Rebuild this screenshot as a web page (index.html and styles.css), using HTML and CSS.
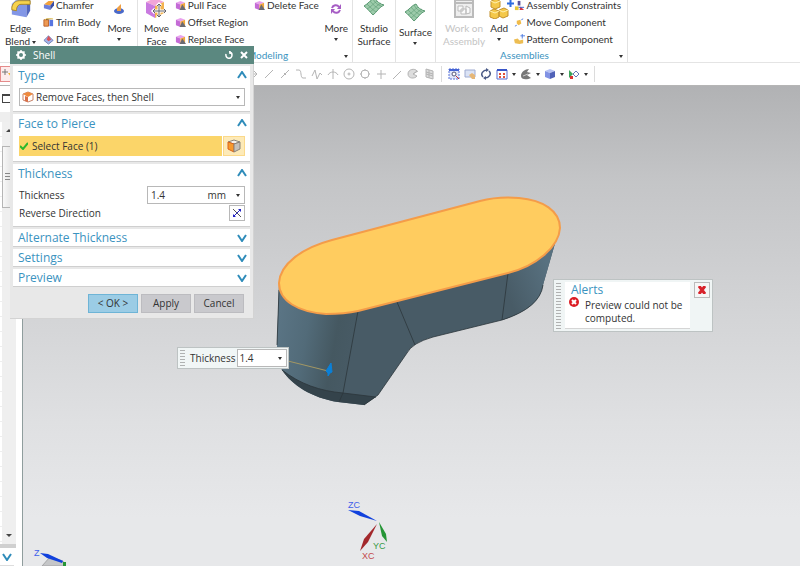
FILE: index.html
```
<!DOCTYPE html>
<html lang="en">
<head>
    <meta charset="UTF-8">
    <meta name="viewport" content="width=device-width, initial-scale=1.0">
    <title>Shell</title>
    <link rel="stylesheet" href="styles.css">
</head>
<body>
    <!-- shared icons -->
    <svg class="defs" aria-hidden="true">
        <symbol id="face" viewBox="0 0 12 12">
            <path d="M1 3l5-2 5 2-5 2z" fill="#e9a2ee"/>
            <path d="M1 3l5 2v6l-5-2z" fill="#c46bd6"/>
            <path d="M6 5l5-2v6l-5 2z" fill="#f0a63c"/>
            <path d="M5 11l3-6 4 6z" fill="#6b6b73"/>
        </symbol>
        <symbol id="block" viewBox="0 0 24 24">
            <path d="M2 7l7-6h13l-4 7z" fill="#9fb6f2"/>
            <path d="M2 7l16 1v14L2 19z" fill="#8296e6"/>
            <path d="M18 8l4-7v14l-4 7z" fill="#5266bd"/>
            <path d="M2 14V11C3 7 6 4 10 4h12v4H12c-3 0-5 3-5 7z" fill="#f7d34e" stroke="#a88421"/>
        </symbol>
        <symbol id="sheet" viewBox="0 0 22 20">
            <path d="M1 9C5 7 8 2 12 1c2 4 5 6 9 7-5 2-7 7-11 10C7 15 4 11 1 9z" fill="#9ccbaa" stroke="#5c9a74"/>
            <path d="M4 7c3 3 6 6 9 8M7 4c3 4 6 6 9 8M10 2c2 4 5 6 8 7M4 12c4-2 7-6 10-8M7 15c4-3 7-7 11-9" fill="none" stroke="#5c9a74" stroke-width=".6"/>
        </symbol>
        <symbol id="cubes" viewBox="0 0 20 22">
            <path d="M2 4l5-2 4 2v6l-5 2-4-2zM1 14l4-2 5 2v6l-4 2-5-2zM10 13l5-2 4 2v6l-5 2-4-2z" fill="#f4c84a" stroke="#c3912c"/>
            <path d="M2 4l4 2 5-2M1 14l5 2 4-2M10 13l4 2 5-2" fill="none" stroke="#fff0b0"/>
        </symbol>
        <symbol id="up" viewBox="0 0 10 8"><path d="M1 7l4-6 4 6" fill="none" stroke="#2f8cba" stroke-width="2"/></symbol>
        <symbol id="down" viewBox="0 0 10 8"><path d="M1 1l4 6 4-6" fill="none" stroke="#2f8cba" stroke-width="2"/></symbol>
    </svg>

    <header class="ribbon">
        <section class="group feature">
            <div class="tools">
                <button class="big">
                    <svg width="24" height="22"><use href="#block"/></svg>
                    <span>Edge<br>Blend<i class="caret"></i></span>
                </button>
                <div class="list">
                    <button><svg viewBox="0 0 12 12"><path d="M1 5l5-4h6L8 6z" fill="#f3a33c"/><path d="M1 5l7 1v5L1 9z" fill="#6c7fdc"/><path d="M8 6l4-5v5l-4 5z" fill="#3a4da6"/></svg>Chamfer</button>
                    <button><svg viewBox="0 0 12 12"><path d="M1 3h5v7H1z" fill="#ee9a54" stroke="#b95f2a"/><path d="M7 3h4v7H7z" fill="#5875e0"/><path d="M2 3l2-1h7" stroke="#f2c94c"/></svg>Trim Body</button>
                    <button><svg viewBox="0 0 12 12"><path d="M1 7l5-5 5 5-5 4z" fill="#a4b5ea" stroke="#7180b5"/><path d="M4 6l2-4 3 4-3 2z" fill="#d9525a"/></svg>Draft</button>
                </div>
                <button class="big more">
                    <svg width="12" height="12" viewBox="0 0 12 12"><ellipse cx="6" cy="8" rx="5" ry="3" fill="#4a69c8"/><path d="M4 5l4-4v7H4z" fill="#ee9f46"/></svg>
                    <span>More<i class="caret"></i></span>
                </button>
            </div>
            <h2></h2>
        </section>
        <section class="group modeling">
            <div class="tools">
                <button class="big">
                    <svg width="22" height="22" viewBox="0 0 22 22"><path d="M1 5l9-4 9 4-9 4z" fill="#f2a5d9"/><path d="M1 5l9 4v12l-9-5z" fill="#c97ae0"/><path d="M10 9l9-4v11l-9 5z" fill="#f3b24d"/><path d="M14 7v13M8 14h13M12 9l2-2 2 2M12 18l2 2 2-2M10 12l-2 2 2 2M19 12l2 2-2 2" fill="none" stroke="#fff" stroke-width="3"/><path d="M14 7v13M8 14h13M12 9l2-2 2 2M12 18l2 2 2-2M10 12l-2 2 2 2M19 12l2 2-2 2" fill="none" stroke="#64646c"/></svg>
                    <span>Move<br>Face</span>
                </button>
                <div class="list">
                    <button><svg><use href="#face"/></svg>Pull Face</button>
                    <button><svg><use href="#face"/></svg>Offset Region</button>
                    <button><svg><use href="#face"/></svg>Replace Face</button>
                </div>
                <div class="list">
                    <button><svg><use href="#face"/></svg>Delete Face</button>
                </div>
                <button class="big more">
                    <svg width="12" height="12" viewBox="0 0 12 12"><path d="M2 5c1-3 5-4 7-1M10 7c-1 3-5 4-7 1" fill="none" stroke="#a65cc4" stroke-width="2"/><path d="M11 1v5H7zM1 11V6h4z" fill="#a65cc4"/></svg>
                    <span>More<i class="caret"></i></span>
                </button>
            </div>
            <h2>Synchronous Modeling<i class="caret corner"></i></h2>
        </section>
        <section class="group studio">
            <div class="tools">
                <button class="big"><svg width="22" height="20"><use href="#sheet"/></svg><span>Studio<br>Surface</span></button>
            </div>
            <h2></h2>
        </section>
        <section class="group surface">
            <div class="tools">
                <button class="big"><svg width="22" height="20"><use href="#sheet"/></svg><span>Surface<i class="caret"></i></span></button>
            </div>
        </section>
        <section class="group assemblies">
            <div class="tools">
                <button class="big" disabled>
                    <svg width="20" height="22" viewBox="0 0 20 22"><path d="M1 3h18v17H1z" fill="#eee" stroke="#bbb" stroke-width="2"/><path d="M1 6h18" stroke="#bbb" stroke-width="2"/><path d="M4 9h5v5H4zM7 12h5v5H7zM12 9l4 2v5l-4 1z" fill="#fafafa" stroke="#bbb"/></svg>
                    <span>Work on<br>Assembly</span>
                </button>
                <button class="big add">
                    <svg width="20" height="22"><use href="#cubes"/></svg>
                    <svg class="plus" width="7" height="7" viewBox="0 0 7 7"><path d="M3.500 0v7M0 3.500h7" stroke="#2e6de0" stroke-width="2"/></svg>
                    <span>Add<i class="caret"></i></span>
                </button>
                <div class="list">
                    <button><svg viewBox="0 0 12 12"><path d="M1 7h4v4H1z" fill="#e6c737"/><path d="M4 1h3v5H4z" fill="#55529e"/><path d="M7 7l4 4H6z" fill="#d23b4b"/><path d="M5 8h6" stroke="#335fd0"/></svg>Assembly Constraints</button>
                    <button><svg viewBox="0 0 12 12"><path d="M3 4l4-1 1 4-3 2-2-2z" fill="#f0bb4a"/><path d="M8 3l2-1M1 10l2-1" stroke="#4a7ae0"/></svg>Move Component</button>
                    <button><svg viewBox="0 0 12 12"><path d="M0 6l4-1 2 2 4-1v4l-4 1-5-1z" fill="#edbd52"/><path d="M9 0v5M7 2h5" stroke="#4a7ae0"/></svg>Pattern Component</button>
                </div>
            </div>
            <h2>Assemblies<i class="caret corner"></i></h2>
        </section>
    </header>

    <nav class="toolbar">
        <button class="filter" aria-label="Selection filter"><svg viewBox="0 0 12 12"><path d="M0 4h6M3 1v6" stroke="#777"/><path d="M6 5h6L9 9z" fill="#f1b431"/></svg></button>
        <div class="snaps">
            <button aria-label="Snap point"><svg viewBox="0 0 12 12"><path d="M1 6h9M7 3l3 3-3 3"/></svg></button>
            <button aria-label="End point"><svg viewBox="0 0 12 12"><path d="M2 10l8-8"/></svg></button>
            <button aria-label="Mid point"><svg viewBox="0 0 12 12"><path d="M2 10l8-8M5 5l2 2"/></svg></button>
            <button aria-label="Control point"><svg viewBox="0 0 12 12"><path d="M1 2h3c3 0 1 8 4 8h3"/></svg></button>
            <button aria-label="Pole"><svg viewBox="0 0 12 12"><path d="M1 8l3-6 2 9 3-6 2 2"/></svg></button>
            <button aria-label="Intersection"><svg viewBox="0 0 12 12"><path d="M6 1v10M1 7c2-4 8-4 10 0"/></svg></button>
            <button aria-label="Arc center"><svg viewBox="0 0 12 12"><circle cx="6" cy="6" r="5"/><circle cx="6" cy="6" r="1"/></svg></button>
            <button aria-label="Quadrant"><svg viewBox="0 0 12 12"><circle cx="6" cy="6" r="4"/><path d="M6 1v2M6 9v2M1 6h2M9 6h2"/></svg></button>
            <button aria-label="Existing point"><svg viewBox="0 0 12 12"><path d="M6 2v9M2 6h9"/></svg></button>
            <button aria-label="Point on curve"><svg viewBox="0 0 12 12"><path d="M2 11l8-8"/></svg></button>
            <button aria-label="Point on face"><svg viewBox="0 0 12 12"><path d="M1 6c0-5 7-6 9-3L6 6l4 2c-2 3-9 3-9-2zM6 6l5-3" fill="#ddd"/></svg></button>
            <button aria-label="Grid"><svg viewBox="0 0 12 12"><path d="M3 1l7 2v8l-7-2zM3 4l7 2M3 6l7 2M6 2v8" fill="#ddd"/></svg></button>
        </div>
        <div class="views">
            <button aria-label="Fit"><svg viewBox="0 0 12 12"><path d="M1 1h10v10H1z" fill="#dfe6fa" stroke="#5670d8" stroke-dasharray="2 1"/><path d="M1 1h10v2H1z" fill="#4563d4"/><circle cx="6" cy="6" r="2" fill="#fff" stroke="#557"/><path d="M8 8l3 3" stroke="#c33"/></svg></button>
            <button aria-label="Pan"><svg viewBox="0 0 12 12"><path d="M1 2h10v7H1z" fill="#dbe3f5" stroke="#9eabd0"/><path d="M5 7l3-2 3 2v4H8z" fill="#e6b777"/></svg></button>
            <button aria-label="Rotate"><svg viewBox="0 0 12 12"><path d="M3 9C0 6 3 2 7 2M9 3c3 3 0 7-4 7" fill="none" stroke="#4a5a86" stroke-width="1.500"/><path d="M6 0l3 2-3 2zM6 8v4L3 10z" fill="#4a5a86"/></svg></button>
            <button aria-label="Layout"><svg viewBox="0 0 12 12"><path d="M1 2h10v9H1z" fill="#fff" stroke="#5b6ed2"/><path d="M1 1h10v2H1z" fill="#3955c8"/><path d="M3 5h2v2H3zM7 5h2v2H7zM3 8h2v2H3zM7 8h2v2H7z" fill="#e2513a"/></svg><i class="caret"></i></button>
            <button aria-label="Style"><svg viewBox="0 0 12 12"><path d="M1 8c0-4 4-7 8-7L7 4l4 1-4 2 4 3c-4 2-10 2-10-2z" fill="#777"/><path d="M3 8l5-2" stroke="#ccc"/></svg><i class="caret"></i></button>
            <button aria-label="Orientation"><svg viewBox="0 0 12 12"><path d="M1 3l5-2 5 2-5 2z" fill="#b5c1f4"/><path d="M1 3l5 2v6L1 9z" fill="#8192e4"/><path d="M6 5l5-2v6l-5 2z" fill="#5062b8"/></svg><i class="caret"></i></button>
            <button aria-label="Section"><svg viewBox="0 0 12 12"><path d="M1 2v8l4-4z" fill="#3aa35a"/><path d="M2 8h3v3H2z" fill="#d33"/><path d="M8 3l3 3-3 3-3-3z" fill="#fff" stroke="#6276b8"/></svg><i class="caret"></i></button>
        </div>
    </nav>

    <main class="workspace">
        <aside class="navigator">
            <div class="pin"><span></span></div>
            <div class="head"></div>
            <div class="rows">
                <div class="scrollbar"><i class="arrow-up"></i><div class="thumb"></div><i class="arrow-down"></i></div>
            </div>
            <button class="expand" aria-label="Expand"><svg width="10" height="8"><use href="#down"/></svg></button>
        </aside>

        <div class="canvas">
            <svg class="model" width="300" height="220" viewBox="270 190 300 220">
                <defs>
                    <linearGradient id="side" gradientUnits="userSpaceOnUse" x1="277" y1="330" x2="360" y2="345">
                        <stop offset="0" stop-color="#5a7484"/>
                        <stop offset=".35" stop-color="#526b79"/>
                        <stop offset=".7" stop-color="#455861"/>
                        <stop offset="1" stop-color="#485b66"/>
                    </linearGradient>
                    <linearGradient id="end" gradientUnits="userSpaceOnUse" x1="505" y1="290" x2="550" y2="270">
                        <stop offset="0" stop-color="#485b66"/>
                        <stop offset="1" stop-color="#587180"/>
                    </linearGradient>
                </defs>
                <path d="M279 285L277 345Q277 360 282 370C292 385 312 398 338 402L364 405 378 395 407 353Q412 343 433 337L502 320Q540 308 543 285L556 240 508 273 358 311z" fill="#485b66"/>
                <path d="M279 285L277 345Q277 360 282 370C300 384 320 391 343 393L358 311z" fill="url(#side)"/>
                <path d="M508 273L502 320Q540 308 543 285L556 240z" fill="url(#end)"/>
                <path d="M282 370C300 384 320 391 343 393L376 397 364 405 338 402C312 398 292 385 282 370z" fill="#34434b"/>
                <path d="M282 370C300 384 320 391 343 393L376 397M358 311L343 393 339 402M397 302l18 43M508 273l-6 47M279 290l-2 55M364 405l14-10 29-42Q412 343 433 337L502 320Q540 308 543 285" fill="none" stroke="#2c363b" stroke-width=".8"/>
                <path d="M332 240L480 201C495 197 508 197 519 198C543 200 560 211 560 228C559 247 536 266 508 273L358 311C345 314 335 314 326 314C298 312 279 301 279 283C280 264 302 248 332 240z" fill="#ffcc5f" stroke="#f49c49" stroke-width="2"/>
                <path d="M288 361l40 10" stroke="#a39763"/>
                <path d="M331 363l1 9-2 1-2 3v-3l-2-2z" fill="#0a80d8" stroke="#0a80d8"/>
            </svg>

            <svg class="csys" width="50" height="66" viewBox="345 498 50 66">
                <path d="M348 510l11 1 18 10-17-5z" fill="#1141dd"/>
                <path d="M377 524l-9 18-8 9 4-12z" fill="#a3282c"/>
                <path d="M379 522l7 12 1 8-5-6z" fill="#259536"/>
                <text x="348" y="508" fill="#3f60ea">ZC</text>
                <text x="373" y="549" fill="#389b48">YC</text>
                <text x="362" y="559" fill="#c4494c">XC</text>
            </svg>

            <svg class="triad" width="36" height="20" viewBox="32 546 36 20">
                <path d="M50 557l-8 9h22l-1-5z" fill="#c5c6c8" stroke="#a4a5a7"/>
                <path d="M40 553l8 1 15 7-1 2-15-5z" fill="#1141dd"/>
                <path d="M63 562h3v4h-3z" fill="#259536"/>
                <text x="34" y="556" fill="#3f60ea">Z</text>
            </svg>

            <div class="handle-box">
                <i class="grip"></i>
                <label for="handle-value">Thickness</label>
                <div class="field">
                    <input id="handle-value" type="text" value="1.4">
                    <button class="drop" aria-label="Options"><i class="caret"></i></button>
                </div>
            </div>

            <div class="alerts" role="alert">
                <i class="grip"></i>
                <div class="message">
                    <h3>Alerts</h3>
                    <svg width="10" height="10" viewBox="0 0 10 10"><circle cx="5" cy="5" r="5" fill="#dc1c24"/><path d="M3 3l4 4M7 3L3 7" stroke="#fff" stroke-width="2"/></svg>
                    <p>Preview could not be computed.</p>
                </div>
                <button class="dismiss" aria-label="Close alerts"><svg width="8" height="8" viewBox="0 0 8 8"><path d="M1 0l6 8M7 0L1 8" stroke="#d8222b" stroke-width="3"/></svg></button>
            </div>
        </div>
    </main>

    <form class="dialog" role="dialog" aria-labelledby="dialog-title">
        <div class="titlebar">
            <svg width="10" height="10" viewBox="0 0 10 10"><circle cx="5" cy="5" r="3" fill="none" stroke="#fff" stroke-width="2"/><path d="M5 0v2M5 8v2M0 5h2M8 5h2M1.500 1.500l1 1M7.500 7.500l1 1M8.500 1.500l-1 1M2.500 7.500l-1 1" stroke="#fff" stroke-width="1.500"/></svg>
            <h1 id="dialog-title">Shell</h1>
            <button type="button" aria-label="Reset"><svg width="8" height="8" viewBox="0 0 8 8"><path d="M1 3c-1 5 6 6 6 1 0-2-1-3-3-3M5 0v3" fill="none" stroke="#fff" stroke-width="1.500"/></svg></button>
            <button type="button" aria-label="Close"><svg width="8" height="8" viewBox="0 0 8 8"><path d="M1 1l6 6M7 1L1 7" stroke="#fff" stroke-width="2"/></svg></button>
        </div>

        <div class="sections">
            <section>
                <h2>Type <svg width="10" height="8"><use href="#up"/></svg></h2>
                <div class="field type">
                    <svg width="12" height="12" viewBox="0 0 12 12"><path d="M1 3l5-2 5 2v6l-5 2-5-2z" fill="#fff" stroke="#c8836a"/><path d="M1 3l5-2 5 2-5 3z" fill="#f08a3c"/><path d="M3 5v5l3 1V6z" fill="#dc7048"/></svg>
                    <select aria-label="Type"><option>Remove Faces, then Shell</option></select>
                    <i class="caret"></i>
                </div>
            </section>
            <section>
                <h2>Face to Pierce <svg width="10" height="8"><use href="#up"/></svg></h2>
                <div class="row pick">
                    <button type="button" class="select-face"><svg width="8" height="8" viewBox="0 0 8 8"><path d="M0 4l3 3 5-6" fill="none" stroke="#2cb82c" stroke-width="2"/></svg>Select Face (1)</button>
                    <button type="button" class="face-button" aria-label="Face"><svg width="14" height="14" viewBox="0 0 14 14"><path d="M1 3l6-2 6 2-6 2z" fill="#f4f0e8" stroke="#8a8378"/><path d="M1 3l6 2v8l-6-3z" fill="#f79a2c" stroke="#d8621c"/><path d="M7 5l6-2v7l-6 3z" fill="#c5c1ba" stroke="#8a8378"/></svg></button>
                </div>
            </section>
            <section>
                <h2>Thickness <svg width="10" height="8"><use href="#up"/></svg></h2>
                <div class="row">
                    <label for="thickness">Thickness</label>
                    <div class="field value">
                        <input id="thickness" type="text" value="1.4">
                        <span>mm</span>
                        <button type="button" class="drop" aria-label="Options"><i class="caret"></i></button>
                    </div>
                </div>
                <div class="row">
                    <label for="reverse">Reverse Direction</label>
                    <button type="button" id="reverse" class="reverse"><svg width="10" height="10" viewBox="0 0 10 10"><path d="M1 1l8 8" stroke="#555"/><path d="M1 9l8-8" stroke="#2323c4"/><path d="M6 1h3v3zM1 6v3h3z" fill="#2323c4"/></svg></button>
                </div>
            </section>
            <section class="closed"><h2>Alternate Thickness <svg width="10" height="8"><use href="#down"/></svg></h2></section>
            <section class="closed"><h2>Settings <svg width="10" height="8"><use href="#down"/></svg></h2></section>
            <section class="closed"><h2>Preview <svg width="10" height="8"><use href="#down"/></svg></h2></section>
        </div>

        <div class="actions">
            <button type="button" class="ok">&lt; OK &gt;</button>
            <button type="button">Apply</button>
            <button type="button">Cancel</button>
        </div>
    </form>
</body>
</html>
```
FILE: styles.css
```
* {
    box-sizing: border-box;
}
body {
    margin: 0;
    height: 100vh;
    display: flex;
    flex-direction: column;
    overflow: hidden;
    background: #fff;
    color: #333;
    font-family: "Open Sans", "Noto Sans", sans-serif;
    font-size: 10px;
    line-height: 13px;
}
h1, h2, h3, p {
    margin: 0;
    font-weight: normal;
}
button, input, select {
    margin: 0;
    padding: 0;
    border: 0;
    background: none;
    color: inherit;
    font: inherit;
}
svg {
    display: block;
    flex: none;
}
.defs {
    position: absolute;
    width: 0;
    height: 0;
}
.caret {
    display: inline-block;
    flex: none;
    width: 0;
    border: 2px solid transparent;
    border-top: 3px solid #333;
    border-bottom: 0;
}

/* ribbon */
.ribbon {
    display: flex;
    flex: none;
    height: 63px;
    overflow: hidden;
    border-bottom: 1px solid #e4e4e4;
    font-family: Lato, "Open Sans", sans-serif;
}
.group {
    display: flex;
    flex-direction: column;
    justify-content: flex-end;
    flex: none;
    border-right: 1px solid #e2e2e2;
}
.group h2 {
    position: relative;
    flex: none;
    height: 14px;
    padding-right: 14px;
    text-align: center;
    font-size: 10px;
    line-height: 14px;
    color: #3b93c0;
}
.corner {
    position: absolute;
    right: 4px;
    top: 7px;
}
.tools {
    display: flex;
    flex: none;
    height: 51px;
}
.big {
    display: flex;
    flex-direction: column;
    align-items: center;
    flex: none;
}
.big svg {
    margin-bottom: 3px;
}
.big .caret {
    margin-left: 2px;
    vertical-align: middle;
}
.more svg {
    margin: 6px 0 7px;
}
.more .caret,
.add .caret,
.surface .caret {
    display: block;
    margin: 3px auto 0;
}
.big:disabled {
    color: #c4c4c4;
}
.list button {
    display: flex;
    align-items: center;
    gap: 2px;
    height: 17px;
    line-height: 11px;
    white-space: nowrap;
}
.list svg {
    width: 11px;
    height: 11px;
}
.feature {
    width: 138px;
}
.feature .tools {
    padding: 0 6px 0 5px;
    justify-content: space-between;
}
.modeling {
    width: 215px;
}
.modeling .tools {
    padding: 0 4px 0 6px;
    justify-content: space-between;
}
.studio {
    width: 43px;
}
.surface {
    width: 40px;
}
.studio .tools,
.surface .tools {
    justify-content: center;
}
.studio svg {
    margin-bottom: 5px;
}
.surface .tools {
    height: 62px;
    padding-top: 3px;
}
.assemblies {
    width: 192px;
}
.assemblies .tools {
    padding: 0 6px 0 7px;
    justify-content: space-between;
}
.add {
    position: relative;
}
.plus {
    position: absolute;
    top: 3px;
    right: -5px;
}

/* toolbar */
.toolbar {
    display: flex;
    align-items: center;
    flex: none;
    height: 23px;
    border-bottom: 1px solid #b5b5b5;
}
.toolbar svg {
    width: 12px;
    height: 12px;
}
.filter {
    padding: 1px;
    border: 1px solid #e58b8b;
    background: #fdecec;
}
.snaps {
    display: flex;
    gap: 4px;
    margin-left: 231px;
    padding-right: 6px;
}
.snaps svg {
    fill: none;
    stroke: #b4b4b4;
}
.views {
    display: flex;
    gap: 4px;
    padding: 2px 6px;
    border: solid #dcdcdc;
    border-width: 0 1px;
}
.views button {
    display: flex;
    align-items: center;
    gap: 4px;
}

/* workspace */
.workspace {
    display: flex;
    flex: 1;
    min-height: 0;
}
.navigator {
    display: flex;
    flex-direction: column;
    flex: none;
    width: 16px;
    margin-right: 6px;
}
.pin {
    flex: none;
    height: 26px;
    padding: 8px 2px;
}
.pin span {
    display: block;
    height: 9px;
    border: 1px solid #444;
    border-top-width: 2px;
}
.head {
    flex: none;
    height: 10px;
    background: #eee;
}
.rows {
    display: flex;
    flex: 1;
    padding-left: 2px;
    border-bottom: 4px solid #d0d0d0;
    background: repeating-linear-gradient(#fff 0 14px, #eee 14px 15px);
}
.scrollbar {
    display: flex;
    flex: 1;
    flex-direction: column;
    align-items: center;
    padding: 7px 0;
    background: #efefef;
}
.arrow-up,
.arrow-down {
    border: 3px solid transparent;
}
.arrow-up {
    border-top: 0;
    border-bottom-color: #444;
}
.arrow-down {
    margin-top: auto;
    border-bottom: 0;
    border-top-color: #444;
}
.thumb {
    width: 14px;
    height: 62px;
    margin-top: 14px;
    border: 1px solid #b5b5b5;
    background:
        repeating-linear-gradient(#888 0 1px, transparent 1px 3px) 2px 26px / 8px 7px no-repeat,
        linear-gradient(90deg, #f8f8f8, #dcdcdc);
}
.expand {
    display: flex;
    justify-content: center;
    align-items: center;
    flex: none;
    height: 18px;
    margin-right: 2px;
    border-bottom: 1px solid #ddd;
}
.canvas {
    position: relative;
    flex: 1;
    border-left: 1px solid #8f9d9d;
    background: linear-gradient(#b1b2b4, #c4c5c7 20%, #d4d5d7 49%, #dfe0e2 70%, #e7e8ea 90%);
}
.model,
.csys,
.triad {
    position: absolute;
}
.model {
    left: 247px;
    top: 104px;
}
.csys {
    left: 322px;
    top: 412px;
}
.triad {
    left: 9px;
    bottom: 0;
}
.canvas text {
    font-family: "Liberation Sans", Arial, sans-serif;
    font-size: 9px;
}
.grip {
    flex: none;
    width: 5px;
    background: radial-gradient(#999 30%, transparent 50%) 0 0 / 2px 3px;
}
.field {
    display: flex;
    align-items: center;
    height: 18px;
    border: 1px solid #b8b8b8;
    background: #fff;
}
.field input,
.field select {
    flex: 1;
    width: 100%;
    min-width: 0;
    appearance: none;
}
.drop {
    display: flex;
    padding: 5px 4px;
}
.handle-box {
    position: absolute;
    left: 154px;
    top: 261px;
    display: flex;
    width: 112px;
    padding: 1px 1px 1px 2px;
    border: 1px solid #bdc3c3;
    background: #f1f6f6;
}
.handle-box label {
    margin: 3px 1px 0 5px;
}
.handle-box .field {
    flex: 1;
    padding-left: 2px;
}
.alerts {
    position: absolute;
    left: 530px;
    top: 193px;
    display: flex;
    align-items: flex-start;
    width: 160px;
    padding: 2px;
    border: 1px solid #bdc3c3;
    background: #f0f5f5;
}
.alerts .grip {
    align-self: stretch;
}
.message {
    display: grid;
    grid-template-columns: 10px 1fr;
    column-gap: 6px;
    flex: 1;
    margin: 0 4px;
    padding: 0 2px 3px 4px;
    border-bottom: 1px solid #d5d5d5;
    background: #fff;
}
.message h3 {
    grid-column: 1 / 3;
    padding-left: 2px;
    font-size: 12px;
    line-height: 15px;
    color: #3b93c0;
}
.message p {
    padding-top: 2px;
}
.dismiss {
    padding: 3px;
    border: 1px solid #bbb;
    background: #f6f6f6;
}

/* shell dialog */
.dialog {
    position: absolute;
    left: 10px;
    top: 46px;
    width: 244px;
    border: solid #d3d3d3;
    border-width: 0 1px 1px 0;
    background: #e8e8e8;
}
.titlebar {
    display: flex;
    align-items: center;
    gap: 7px;
    height: 18px;
    padding: 0 6px;
    margin-right: -1px;
    background: #5b8880;
    color: #fff;
}
.titlebar h1 {
    flex: 1;
    font-size: 10px;
}
.sections {
    display: flex;
    flex-direction: column;
    gap: 2px;
    padding: 2px 3px;
}
.sections section {
    padding: 0 5px 5px 6px;
    border-bottom: 1px solid #cfcfcf;
    background: #fff;
}
.sections section.closed {
    padding-bottom: 0;
}
.sections h2 {
    display: flex;
    justify-content: space-between;
    align-items: center;
    height: 18px;
    margin: 0 -2px 0 -1px;
    font-size: 12px;
    color: #3b93c0;
}
.sections .closed h2 {
    height: 17px;
}
.type {
    gap: 2px;
    margin-top: 4px;
    padding: 0 4px 0 2px;
}
.row {
    display: flex;
    justify-content: space-between;
    align-items: center;
    margin-top: 1px;
}
h2 + .row {
    margin-top: 4px;
}
.select-face {
    display: flex;
    align-items: center;
    gap: 4px;
    flex: 1;
    height: 20px;
    padding-left: 1px;
    background: #fbd569;
}
.face-button {
    margin-left: 1px;
    padding: 2px 3px;
    border: 1px solid #fbd98a;
    background: #fdeab8;
}
.value {
    width: 98px;
    padding-left: 3px;
}
.value .drop {
    margin-left: 6px;
}
.reverse {
    padding: 2px;
    border: 1px solid #b8b8b8;
}
.actions {
    display: flex;
    justify-content: flex-end;
    gap: 3px;
    padding: 5px 9px;
}
.actions button {
    width: 50px;
    height: 19px;
    border: 1px solid #bcbcc0;
    background: #c9c9cd;
}
.actions .ok {
    border-color: #6eb4d6;
    background: #9bcce5;
}
```
